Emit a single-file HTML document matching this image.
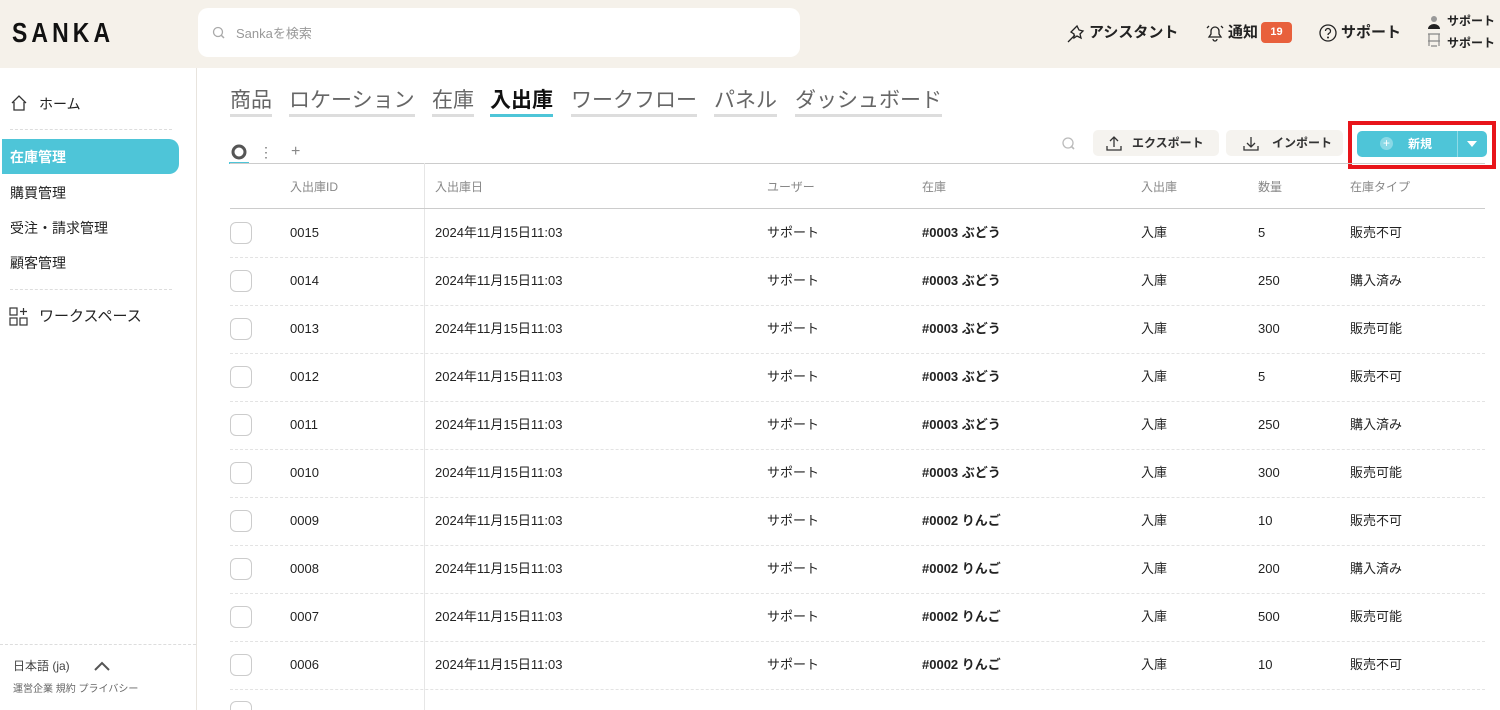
<!DOCTYPE html>
<html><head><meta charset="utf-8"><style>
*{margin:0;padding:0;box-sizing:border-box}
html,body{width:1500px;height:710px;overflow:hidden}
body{background:#fff;font-family:"Liberation Sans","Noto Sans CJK JP",sans-serif;color:#222;position:relative}
.a{position:absolute;white-space:nowrap}
.hdr{position:absolute;left:0;top:0;width:1500px;height:68px;background:#f5f1ea}
.side{position:absolute;left:0;top:68px;width:197px;height:642px;border-right:1px solid #e8e4de}
.tab{font-size:21px;line-height:24px;color:#666;border-bottom:3px solid #ddd;padding-bottom:1px;top:89px}
.th{font-size:12px;line-height:16px;color:#888;top:179px}
.td{font-size:13px;line-height:18px;color:#222}
.cb{position:absolute;left:230px;width:22px;height:22px;border:1.5px solid #ccc;border-radius:6px}
.rl{position:absolute;left:230px;width:1255px;border-top:1px dashed #e3e3e3}
</style></head><body>
<div class="hdr"></div>
<div class="a" style="left:12px;top:17px;font-size:28px;line-height:32px;letter-spacing:5px;font-weight:bold;color:#111;transform:scaleX(0.82);transform-origin:left">SANKA</div>
<div class="a" style="left:198px;top:8px;width:602px;height:49px;background:#fff;border-radius:10px"></div>
<svg class="a" style="left:212px;top:26px" width="14" height="14"><circle cx="6" cy="6" r="4.5" fill="none" stroke="#aaa" stroke-width="1.3"/><path d="M9 9l3 3" stroke="#aaa" stroke-width="1.5"/></svg>
<div class="a" style="left:236px;top:25px;font-size:13px;line-height:18px;color:#999">Sankaを検索</div>
<svg class="a" style="left:1066px;top:24px" width="20" height="20"><path d="M2 18L9 11M8 5l3-3 2 4 4 1-3 3 1 4-4-2-3 2 0-4-3-2z" fill="none" stroke="#222" stroke-width="1.3"/></svg>
<div class="a" style="left:1089px;top:22px;font-size:15px;line-height:22px;font-weight:bold">アシスタント</div>
<svg class="a" style="left:1205px;top:23px" width="20" height="20"><path d="M4 14h12l-2-3V8a4 4 0 0 0-8 0v3zM8 16a2 2 0 0 0 4 0M2 5l2-2M18 5l-2-2" fill="none" stroke="#222" stroke-width="1.3"/></svg>
<div class="a" style="left:1228px;top:22px;font-size:15px;line-height:22px;font-weight:bold">通知</div>
<div class="a" style="left:1261px;top:22px;width:31px;height:21px;background:#e8603c;border-radius:4px;color:#fff;font-size:11px;font-weight:bold;text-align:center;line-height:21px">19</div>
<svg class="a" style="left:1318px;top:23px" width="20" height="20"><circle cx="10" cy="10" r="8" fill="none" stroke="#222" stroke-width="1.3"/><path d="M7.5 8a2.5 2.5 0 1 1 3.5 2.3c-.8.4-1 .9-1 1.7" fill="none" stroke="#222" stroke-width="1.3"/><circle cx="10" cy="14.5" r="1" fill="#222"/></svg>
<div class="a" style="left:1341px;top:22px;font-size:15px;line-height:22px;font-weight:bold">サポート</div>
<svg class="a" style="left:1426px;top:14px" width="16" height="36"><circle cx="8" cy="5" r="3" fill="#999"/><path d="M2 15a6 5 0 0 1 12 0z" fill="#222"/><path d="M2 20h12M3 20v12M13 20v12M2 27h12M5 32h6" stroke="#888" stroke-width="1.2" fill="none"/></svg>
<div class="a" style="left:1447px;top:13px;font-size:12px;line-height:16px;font-weight:bold">サポート</div>
<div class="a" style="left:1447px;top:35px;font-size:12px;line-height:16px;font-weight:bold">サポート</div>

<div class="side"></div>
<svg class="a" style="left:10px;top:94px" width="18" height="18"><path d="M2 9L9 2l7 7M4 8v8h10V8" fill="none" stroke="#333" stroke-width="1.3"/></svg>
<div class="a" style="left:39px;top:94px;font-size:14px;line-height:20px">ホーム</div>
<div class="a" style="left:10px;top:129px;width:162px;border-top:1px dashed #ddd"></div>
<div class="a" style="left:2px;top:139px;width:177px;height:35px;background:#4ec5d8;border-radius:0 10px 10px 0"></div>
<div class="a" style="left:10px;top:147px;font-size:14px;line-height:20px;color:#fff;font-weight:bold">在庫管理</div>
<div class="a" style="left:10px;top:183px;font-size:14px;line-height:20px">購買管理</div>
<div class="a" style="left:10px;top:218px;font-size:14px;line-height:20px">受注・請求管理</div>
<div class="a" style="left:10px;top:253px;font-size:14px;line-height:20px">顧客管理</div>
<div class="a" style="left:10px;top:289px;width:162px;border-top:1px dashed #ddd"></div>
<svg class="a" style="left:9px;top:307px" width="20" height="20"><rect x="1" y="1" width="7" height="7" fill="none" stroke="#333" stroke-width="1.2"/><rect x="1" y="11" width="7" height="7" fill="none" stroke="#333" stroke-width="1.2"/><rect x="11" y="11" width="7" height="7" fill="none" stroke="#333" stroke-width="1.2"/><path d="M14.5 1v7M11 4.5h7" stroke="#333" stroke-width="1.2"/></svg>
<div class="a" style="left:39px;top:306px;font-size:15px;line-height:22px">ワークスペース</div>
<div class="a" style="left:0;top:644px;width:196px;border-top:1px dashed #ddd"></div>
<div class="a" style="left:13px;top:658px;font-size:12px;line-height:16px;color:#444">日本語 (ja)</div>
<svg class="a" style="left:93px;top:660px" width="18" height="12"><path d="M2 10l7-7 7 7" fill="none" stroke="#555" stroke-width="2"/></svg>
<div class="a" style="left:13px;top:683px;font-size:10px;line-height:14px;color:#666">運営企業 規約 プライバシー</div>

<div class="a tab" style="left:230px">商品</div>
<div class="a tab" style="left:289px">ロケーション</div>
<div class="a tab" style="left:432px">在庫</div>
<div class="a tab" style="left:490px;color:#111;font-weight:bold;border-color:#4ec5d8">入出庫</div>
<div class="a tab" style="left:571px">ワークフロー</div>
<div class="a tab" style="left:714px">パネル</div>
<div class="a tab" style="left:795px">ダッシュボード</div>

<svg class="a" style="left:230px;top:144px" width="18" height="18"><circle cx="9" cy="8" r="6" fill="none" stroke="#555" stroke-width="3"/></svg>
<div class="a" style="left:229px;top:162px;width:20px;height:2px;background:#4ec5d8"></div>
<div class="a" style="left:259px;top:143px;font-size:14px;line-height:18px;color:#777">⋮</div>
<div class="a" style="left:291px;top:143px;font-size:16px;line-height:18px;color:#888">+</div>
<svg class="a" style="left:1061px;top:136px" width="16" height="16"><circle cx="7" cy="7" r="5" fill="none" stroke="#bbb" stroke-width="1.3"/><path d="M10 10l3 3" stroke="#bbb" stroke-width="1.6"/></svg>
<div class="a" style="left:1093px;top:130px;width:126px;height:26px;background:#f5f3ef;border-radius:5px"></div>
<svg class="a" style="left:1105px;top:134px" width="18" height="18"><path d="M9 13V3M5 7l4-4 4 4M2 12v4h14v-4" fill="none" stroke="#333" stroke-width="1.3"/></svg>
<div class="a" style="left:1132px;top:135px;font-size:12px;line-height:16px;font-weight:bold;color:#333">エクスポート</div>
<div class="a" style="left:1226px;top:130px;width:117px;height:26px;background:#f5f3ef;border-radius:5px"></div>
<svg class="a" style="left:1242px;top:134px" width="18" height="18"><path d="M9 3v10M5 9l4 4 4-4M2 12v4h14v-4" fill="none" stroke="#333" stroke-width="1.3"/></svg>
<div class="a" style="left:1272px;top:135px;font-size:12px;line-height:16px;font-weight:bold;color:#333">インポート</div>
<div class="a" style="left:1348px;top:121px;width:148px;height:48px;border:4px solid #e8141a"></div>
<div class="a" style="left:1357px;top:131px;width:130px;height:26px;background:#4ec5d8;border-radius:5px"></div>
<div class="a" style="left:1457px;top:131px;width:1px;height:26px;background:#8fdbe7"></div>
<div class="a" style="left:1380px;top:137px;width:13px;height:13px;border-radius:50%;background:#8ad9e6;color:#fff;font-size:12px;line-height:13px;text-align:center">+</div>
<div class="a" style="left:1408px;top:136px;font-size:12px;line-height:16px;font-weight:bold;color:#fff">新規</div>
<svg class="a" style="left:1466px;top:140px" width="12" height="8"><path d="M1 1h10L6 7z" fill="#fff"/></svg>

<div class="a" style="left:230px;top:163px;width:1255px;border-top:1px solid #ccc"></div>
<div class="a" style="left:424px;top:163px;width:1px;height:547px;background:#e6e6e6"></div>
<div class="a th" style="left:290px">入出庫ID</div>
<div class="a th" style="left:435px">入出庫日</div>
<div class="a th" style="left:767px">ユーザー</div>
<div class="a th" style="left:922px">在庫</div>
<div class="a th" style="left:1141px">入出庫</div>
<div class="a th" style="left:1258px">数量</div>
<div class="a th" style="left:1350px">在庫タイプ</div>
<div class="a" style="left:230px;top:208px;width:1255px;border-top:1px solid #ccc"></div>

<div id="rows"></div>
<script>
var d=[["0015","#0003 ぶどう","5","販売不可"],["0014","#0003 ぶどう","250","購入済み"],["0013","#0003 ぶどう","300","販売可能"],["0012","#0003 ぶどう","5","販売不可"],["0011","#0003 ぶどう","250","購入済み"],["0010","#0003 ぶどう","300","販売可能"],["0009","#0002 りんご","10","販売不可"],["0008","#0002 りんご","200","購入済み"],["0007","#0002 りんご","500","販売可能"],["0006","#0002 りんご","10","販売不可"]];
var h="";
d.forEach(function(r,i){var c=233+i*48,t=c-9;
h+='<div class="cb" style="top:'+(c-11)+'px"></div>';
h+='<div class="a td" style="left:290px;top:'+t+'px">'+r[0]+'</div>';
h+='<div class="a td" style="left:435px;top:'+t+'px">2024年11月15日11:03</div>';
h+='<div class="a td" style="left:767px;top:'+t+'px">サポート</div>';
h+='<div class="a td" style="left:922px;top:'+t+'px;font-weight:bold">'+r[1]+'</div>';
h+='<div class="a td" style="left:1141px;top:'+t+'px">入庫</div>';
h+='<div class="a td" style="left:1258px;top:'+t+'px">'+r[2]+'</div>';
h+='<div class="a td" style="left:1350px;top:'+t+'px">'+r[3]+'</div>';
h+='<div class="rl" style="top:'+(c+24)+'px"></div>';});
h+='<div class="cb" style="top:701px"></div>';
document.getElementById("rows").innerHTML=h;
</script>
</body></html>
